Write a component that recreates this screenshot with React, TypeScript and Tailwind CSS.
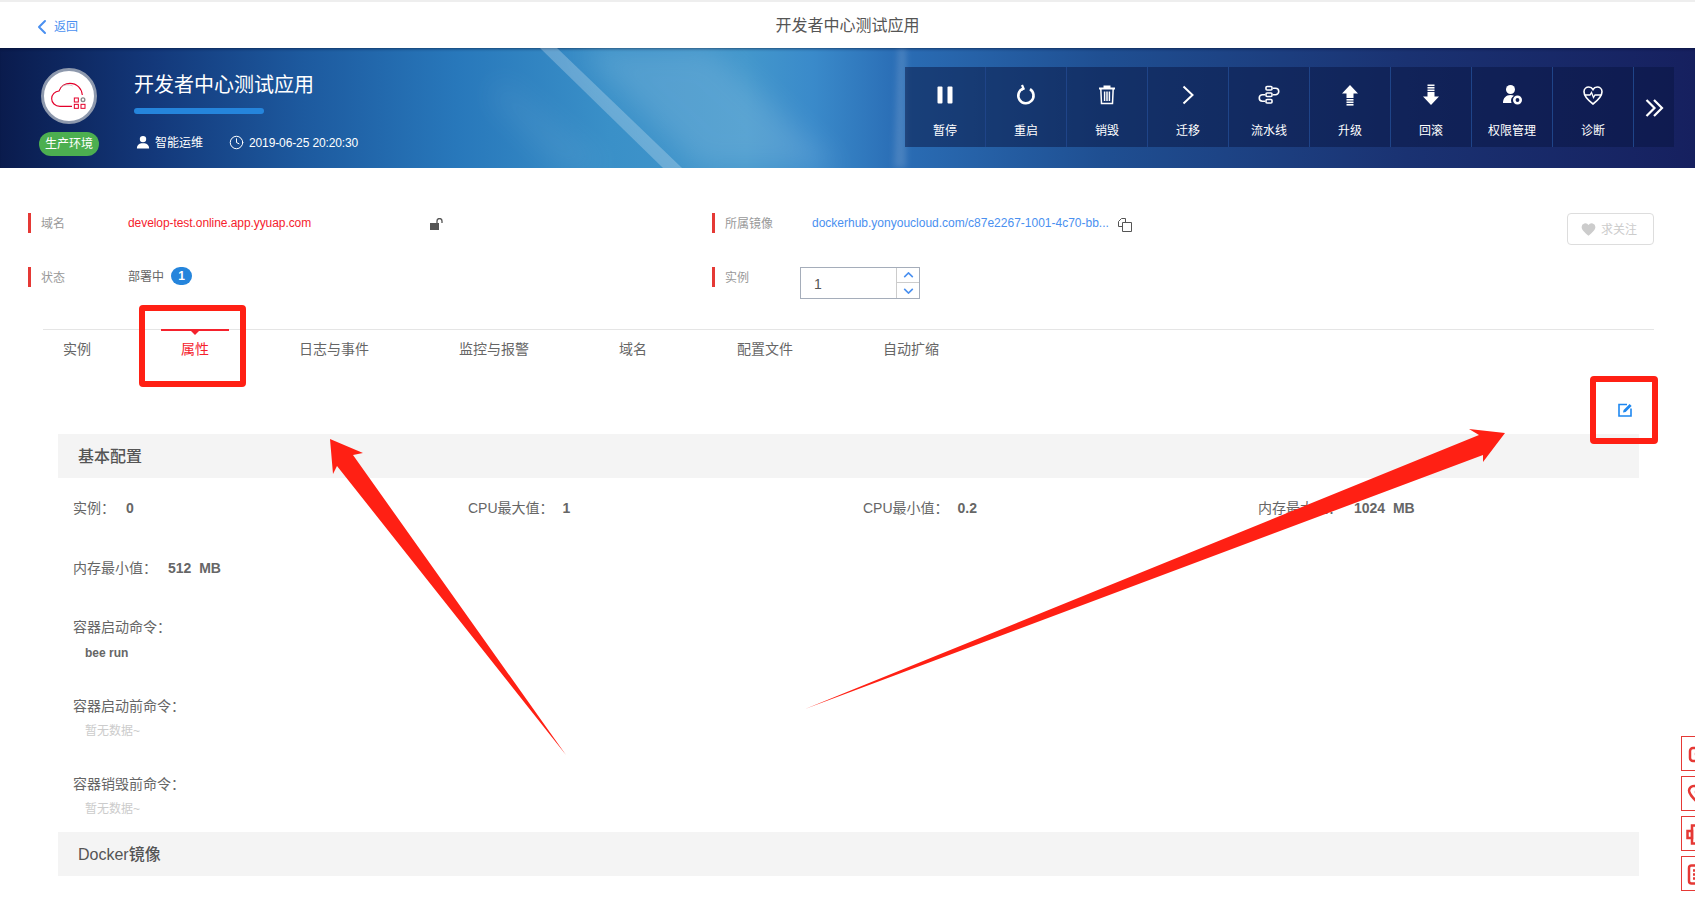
import React from "react";
import { ChevronLeft, Clock } from "lucide-react";

const iconClass = "w-6 h-6 text-white";

const PauseIcon = () => (
  <svg viewBox="0 0 24 24" className={iconClass} fill="currentColor">
    <rect x="4.5" y="3.5" width="5" height="17" rx="1" />
    <rect x="14.5" y="3.5" width="5" height="17" rx="1" />
  </svg>
);

const RestartIcon = () => (
  <svg viewBox="0 0 24 24" className={iconClass} fill="none" stroke="currentColor" strokeWidth="2.6">
    <path d="M9 5.6a7.6 7.6 0 1 0 7 .6" />
    <path d="M8 2l1.6 3.8L6 7.6" strokeWidth="2.2" />
  </svg>
);

const TrashIcon = () => (
  <svg viewBox="0 0 24 24" className={iconClass} fill="none" stroke="currentColor" strokeWidth="1.5">
    <path d="M4 5.5h16M9.5 5.5V3.5h5v2" strokeWidth="2" />
    <path d="M5.8 5.5l.7 15h11l.7-15" />
    <path d="M9.6 8.5v9.5M12 8.5v9.5M14.4 8.5v9.5" />
  </svg>
);

const NextIcon = () => (
  <svg viewBox="0 0 24 24" className={iconClass} fill="none" stroke="currentColor" strokeWidth="2">
    <path d="M7.5 3.5l9 8.500-9 8.500" />
  </svg>
);

const PipelineIcon = () => (
  <svg viewBox="0 0 24 24" className={iconClass} fill="none" stroke="currentColor" strokeWidth="1.6">
    <rect x="9" y="3.500" width="6" height="3.500" rx="1" />
    <rect x="9" y="10" width="6" height="3.500" rx="1" />
    <rect x="9" y="16.500" width="6" height="3.500" rx="1" />
    <path d="M16 5.200h2.500a3 3 0 0 1 0 6.500H16" />
    <path d="M8 11.700H5.500a3 3 0 0 0 0 6.500H8" />
  </svg>
);

const UpgradeIcon = () => (
  <svg viewBox="0 0 24 24" className={iconClass} fill="currentColor">
    <path d="M12 2l8 8.500h-4.500V15h-7v-4.500H4z" />
    <rect x="8.500" y="16" width="7" height="1.600" />
    <rect x="8.500" y="18.500" width="7" height="1.600" />
    <rect x="8.500" y="21" width="7" height="1.600" />
  </svg>
);

const RollbackIcon = () => (
  <svg viewBox="0 0 24 24" className={iconClass} fill="currentColor">
    <rect x="8.500" y="1.500" width="7" height="1.600" />
    <rect x="8.500" y="4" width="7" height="1.600" />
    <rect x="8.500" y="6.500" width="7" height="1.600" />
    <path d="M8.500 9h7v4.500H20L12 22l-8-8.500h4.500z" />
  </svg>
);

const PermissionIcon = () => (
  <svg viewBox="0 0 24 24" className={iconClass} fill="currentColor">
    <circle cx="10.500" cy="6.500" r="4.500" />
    <path d="M3 20c0-5 3-8 7.500-8 1.300 0 2.500.3 3.500.8A6 6 0 0 0 11.500 20z" />
    <circle cx="17.500" cy="17" r="3.200" fill="none" stroke="currentColor" strokeWidth="2.600" />
  </svg>
);

const DiagnoseIcon = () => (
  <svg viewBox="0 0 24 24" className={iconClass} fill="none" stroke="currentColor" strokeWidth="1.600">
    <path d="M12 21C6 16.500 3 13 3 8.800 3 5.800 5.300 4 7.800 4c1.800 0 3.300.9 4.200 2.500C12.900 4.900 14.400 4 16.200 4 18.700 4 21 5.800 21 8.800 21 13 18 16.500 12 21z" />
    <path d="M4 12h5l1.500-2.500 2 5 1.500-2.500h6" strokeWidth="1.300" />
  </svg>
);

const actions = [
  { label: "暂停", icon: <PauseIcon /> },
  { label: "重启", icon: <RestartIcon /> },
  { label: "销毁", icon: <TrashIcon /> },
  { label: "迁移", icon: <NextIcon /> },
  { label: "流水线", icon: <PipelineIcon /> },
  { label: "升级", icon: <UpgradeIcon /> },
  { label: "回滚", icon: <RollbackIcon /> },
  { label: "权限管理", icon: <PermissionIcon /> },
  { label: "诊断", icon: <DiagnoseIcon /> },
];

const tabs = ["实例", "属性", "日志与事件", "监控与报警", "域名", "配置文件", "自动扩缩"];

const stats = [
  { label: "实例：", value: "0", gap: "ml-[11px]" },
  { label: "CPU最大值：", value: "1", gap: "ml-[9px]" },
  { label: "CPU最小值：", value: "0.2", gap: "ml-[9px]" },
  { label: "内存最大值：", value: "1024  MB", gap: "ml-3" },
  { label: "内存最小值：", value: "512  MB", gap: "ml-[11px]" },
];

const commands = [
  { label: "容器启动命令：", value: "bee run" },
  { label: "容器启动前命令：", value: "" },
  { label: "容器销毁前命令：", value: "" },
];

const Logo = () => (
  <svg viewBox="132 213 150 150" className="w-full h-full" fill="none">
    <path
      d="M216 319H180C165 319 155 308 155 296 155 283 165 274 177 273 182 258 196 250 210 250 230 250 245 265 247 285"
      stroke="#e4002b"
      strokeWidth="3.500"
    />
    <path d="M183 262C192 254 206 252 218 258" stroke="#bbb" strokeWidth="2" />
    <rect x="223" y="294" width="12" height="12" stroke="#e4002b" strokeWidth="3" />
    <rect x="223" y="313" width="12" height="12" stroke="#e4002b" strokeWidth="3" />
    <rect x="243" y="313" width="12" height="12" stroke="#e4002b" strokeWidth="3" />
    <circle cx="249" cy="299" r="5.500" stroke="#888" strokeWidth="4" />
  </svg>
);

const Banner = () => (
  <div className="relative h-[120px] flex bg-[linear-gradient(90deg,#0a1b4d_0%,#13387a_9%,#1d5a9f_18%,#2878bb_27%,#3a90c8_36%,#4397cc_44%,#3a8aca_48%,#2a6db5_53%,#1f4f92_65%,#1a3272_83%,#16205f_100%)] shadow-[inset_0_3px_3px_-2px_rgba(0,10,40,0.5)] overflow-hidden">
    <svg className="absolute inset-0 w-full h-full" viewBox="0 0 1695 120" preserveAspectRatio="none">
      <defs>
        <filter id="soft" x="-20%" y="-20%" width="140%" height="140%">
          <feGaussianBlur stdDeviation="14" />
        </filter>
        <filter id="edge" x="-50%" y="-20%" width="200%" height="140%">
          <feGaussianBlur stdDeviation="3" />
        </filter>
      </defs>
      <polygon points="540,0 557,0 682,120 663,120" fill="#fff" opacity="0.24" />
      <polygon points="575,0 710,0 840,120 700,120" fill="#fff" opacity="0.12" filter="url(#soft)" />
      <polygon points="490,50 560,120 610,120 500,30" fill="#fff" opacity="0.06" filter="url(#soft)" />
      <polygon points="898,0 906,0 906,120 894,120" fill="#fff" opacity="0.14" filter="url(#edge)" />
    </svg>
    <div className="relative ml-[39px] w-[60px] flex flex-col items-center pt-5">
      <div className="w-14 h-14 rounded-full bg-white border-[3px] border-[#8e99ad] overflow-hidden">
        <Logo />
      </div>
      <span className="mt-2 w-[60px] h-6 rounded-xl bg-[#4caf50] text-white text-[12px] leading-6 text-center">
        生产环境
      </span>
    </div>
    <div className="relative ml-[35px] flex flex-col">
      <h1 className="mt-[23px] text-[20px] leading-7 font-normal text-white">开发者中心测试应用</h1>
      <div className="mt-[9px] w-[130px] h-[6px] rounded-sm bg-[#2585dc]" />
      <div className="mt-[19px] flex items-center text-[12px] leading-5 text-white">
        <svg viewBox="0 0 24 24" className="ml-[2px] -mt-[2px] w-[14px] h-[14px]" fill="currentColor">
          <circle cx="12" cy="7" r="5.500" />
          <path d="M1.500 23c0-6 4-8 7.500-9h6c3.500 1 7.500 3 7.500 9z" />
        </svg>
        <span className="ml-[5px]">智能运维</span>
        <Clock className="ml-[26px] -mt-[2px] w-[15px] h-[15px]" strokeWidth={1.6} />
        <span className="ml-[5px] tracking-[-0.12px]">2019-06-25 20:20:30</span>
      </div>
    </div>
    <div className="relative ml-auto mr-[21px] mt-[19px] h-[80px] flex bg-[#081440]/50">
      {actions.map((a) => (
        <div key={a.label} className="w-[81px] flex flex-col items-center border-r border-[#1f4488] text-white">
          <div className="mt-4 h-6">{a.icon}</div>
          <span className="mt-[14px] text-[12px] leading-5">{a.label}</span>
        </div>
      ))}
      <div className="w-10 pt-[2px] flex items-center justify-center">
        <svg viewBox="0 0 24 24" className="w-6 h-6 text-white" fill="none" stroke="currentColor" strokeWidth="2.200">
          <path d="M4.500 4l8 8-8 8M12 4l8 8-8 8" />
        </svg>
      </div>
    </div>
  </div>
);

const InfoRow = ({ label, labelWidth = 87, children }: { label: string; labelWidth?: 75 | 87; children: React.ReactNode }) => (
  <div className="h-[54px] flex items-start">
    <span className="w-[3px] h-5 bg-[#e53935]" />
    <span className={`ml-[10px] pt-px text-[12px] leading-5 text-[#999] ${labelWidth === 75 ? "w-[75px]" : "w-[87px]"}`}>{label}</span>
    {children}
  </div>
);

const SectionHeader = ({ title }: { title: string }) => (
  <div className="ml-[58px] mr-[56px] h-[44px] pl-5 pt-px bg-[#f4f4f4] text-[16px] leading-[44px] font-medium text-[#555]">
    {title}
  </div>
);

const sideIcons = [
  <svg key="a" viewBox="0 0 24 24" className="w-6 h-6" fill="none" stroke="#e53935" strokeWidth="2.500"><rect x="4" y="6" width="14" height="13" rx="3" /><circle cx="12" cy="12" r="2" fill="#e53935" /></svg>,
  <svg key="b" viewBox="0 0 24 24" className="w-6 h-6" fill="none" stroke="#e53935" strokeWidth="2.500"><path d="M12 21C6 15 3 12 3 8.500A5 5 0 0 1 12 6" /><circle cx="12" cy="10" r="2" fill="#e53935" /></svg>,
  <svg key="c" viewBox="0 0 24 24" className="w-6 h-6" fill="none" stroke="#e53935" strokeWidth="2.500"><rect x="1.500" y="9" width="4.500" height="7" /><rect x="6" y="3.500" width="14" height="18" /></svg>,
  <svg key="d" viewBox="0 0 24 24" className="w-6 h-6" fill="none" stroke="#e53935" strokeWidth="2.500"><rect x="3" y="3.500" width="16" height="18" rx="2.500" /><path d="M7 8.500h10M7 12.500h10M7 16.500h10" /></svg>,
];

export default function App() {
  return (
    <div className="relative w-full h-[897px] overflow-hidden bg-white font-['Liberation_Sans','Noto_Sans_CJK_SC',sans-serif] text-[#666]">
      <div className="h-[2px] bg-[#eee]" />
      <div className="relative h-[46px] pt-[2px] flex items-center justify-center bg-white">
        <div className="absolute left-[30px] top-[13px] flex items-center text-[12px] leading-5 text-[#4a90f0]">
          <ChevronLeft className="w-6 h-6" strokeWidth={2} />
          <span>返回</span>
        </div>
        <span className="text-[16px] text-[#555]">开发者中心测试应用</span>
      </div>
      <Banner />

      <div className="flex pl-[28px] pt-[45px] pb-2">
        <div className="w-[684px]">
          <InfoRow label="域名">
            <span className="w-[302px] text-[12px] leading-5 tracking-[-0.07px] text-[#f5222d]">develop-test.online.app.yyuap.com</span>
            <svg viewBox="0 0 14 12" className="mt-[5px] w-[14px] h-3">
              <rect x="0" y="5" width="9" height="7" fill="#555" />
              <path d="M7 5V3a2.500 2.500 0 0 1 5 0v2" fill="none" stroke="#555" strokeWidth="1.300" />
            </svg>
          </InfoRow>
          <InfoRow label="状态">
            <span className="pt-px text-[12px] leading-[18px] text-[#666]">部署中</span>
            <span className="ml-[7px] w-[21px] h-[18px] rounded-full bg-[#2585dc] text-white text-[12px] font-bold leading-[18px] text-center">1</span>
          </InfoRow>
        </div>
        <div className="flex-1">
          <InfoRow label="所属镜像">
            <span className="w-[306px] text-[12px] leading-5 text-[#4a90f0] whitespace-nowrap">dockerhub.yonyoucloud.com/c87e2267-1001-4c70-bb...</span>
            <svg viewBox="0 0 14 14" className="mt-[5px] w-[14px] h-[14px]" fill="none" stroke="#555" strokeWidth="1">
              <path d="M4.500 8.500H.5v-5l3-3h4v4" />
              <path d="M4.500 4.500h9v9h-9z" />
            </svg>
          </InfoRow>
          <InfoRow label="实例" labelWidth={75}>
            <div className="w-[120px] h-[32px] flex border border-[#a5adba] bg-white">
              <span className="flex-1 pl-[13px] text-[14px] leading-[32px] text-[#555]">1</span>
              <div className="w-[23px] flex flex-col border-l border-[#ccc]">
                <span className="h-[15px] flex items-center justify-center border-b border-[#ccc]">
                  <svg viewBox="0 0 12 7" className="w-[11px] h-[6px]" fill="none" stroke="#4a90f0" strokeWidth="1.800"><path d="M1 6l5-5 5 5" /></svg>
                </span>
                <span className="flex-1 flex items-center justify-center">
                  <svg viewBox="0 0 12 7" className="w-[11px] h-[6px]" fill="none" stroke="#4a90f0" strokeWidth="1.800"><path d="M1 1l5 5 5-5" /></svg>
                </span>
              </div>
            </div>
          </InfoRow>
        </div>
        <div className="mr-[41px] w-[87px] h-[32px] flex items-center pl-[14px] pt-[2px] border border-[#ddd] rounded text-[12px] text-[#ccc]">
          <svg viewBox="0 0 24 24" className="-ml-px -mt-[2px] w-[15px] h-[15px]" fill="#ccc">
            <path d="M12 22C5 16 1 12.500 1 8a6 6 0 0 1 11-3.300A6 6 0 0 1 23 8c0 4.500-4 8-11 14z" />
          </svg>
          <span className="ml-[5px]">求关注</span>
        </div>
      </div>

      <div className="ml-[43px] mr-[41px] border-t border-[#e5e5e5]">
        <div className="flex gap-[90px] pl-5 pt-2 text-[14px] leading-[22px] text-[#666]">
          {tabs.map((t) =>
            t === "属性" ? (
              <span key={t} className="relative text-[#f5222d]">
                {t}
                <span className="absolute -left-5 -right-5 -top-[9px] h-[2px] bg-[#f5222d]" />
                <span className="absolute left-[10px] -top-[7px] w-0 h-0 border-x-[4px] border-t-[4px] border-x-transparent border-t-[#f5222d]" />
              </span>
            ) : (
              <span key={t}>{t}</span>
            ),
          )}
        </div>
      </div>

      <div className="mt-[42px] mb-[17px] pr-[62px] flex justify-end h-[15px]">
        <svg viewBox="0 0 15 15" className="w-[15px] h-[15px]" fill="none">
          <path d="M9 2.500H1v11.500h12V6.500" stroke="#1e88f0" strokeWidth="1.600" />
          <path d="M5 10.500l.6-2.600 6-6 2 2-6 6z" fill="#1e88f0" />
        </svg>
      </div>

      <SectionHeader title="基本配置" />
      <div className="ml-[73px] pt-5 grid grid-cols-[395px_395px_395px_395px] gap-y-10 text-[14px] leading-5">
        {stats.map((s) => (
          <div key={s.label} className="flex text-[#666]">
            <span>{s.label}</span>
            <span className={`${s.gap} font-bold whitespace-pre text-[#666]`}>{s.value}</span>
          </div>
        ))}
      </div>
      <div className="ml-[73px] mt-[39px] flex flex-col gap-[32.500px] mb-3">
        {commands.map((c) => (
          <div key={c.label} className="h-[46px]">
            <div className="text-[14px] leading-5 text-[#666]">{c.label}</div>
            {c.value ? (
              <div className="mt-[6px] ml-3 text-[12px] leading-5 font-bold text-[#666]">{c.value}</div>
            ) : (
              <div className="mt-[5px] ml-3 text-[12px] leading-5 text-[#ccc]">暂无数据~</div>
            )}
          </div>
        ))}
      </div>
      <SectionHeader title="Docker镜像" />

      <div className="absolute left-[1681px] top-[736px] flex flex-col gap-[5px]">
        {sideIcons.map((icon, i) => (
          <div key={i} className="w-10 h-[35px] flex items-center pl-1 border border-[#e53935] bg-white">
            {icon}
          </div>
        ))}
      </div>

      {/* red hand-drawn annotations on top of the screenshot */}
      <div className="absolute left-[139px] top-[305px] w-[107px] h-[82px] border-[6px] border-[#ff2014] rounded" />
      <div className="absolute left-[1590px] top-[376px] w-[68px] h-[68px] border-[6px] border-[#ff2014] rounded" />
      <svg className="absolute left-0 top-0 w-[1695px] h-[897px] pointer-events-none" viewBox="0 0 1695 897" fill="#ff2014">
        <polygon points="330,439 363,453 353,455 566,755 337,466 333,474" />
        <polygon points="1505,433 1469,429 1479,435 805,709 1483,455 1483,462" />
      </svg>
    </div>
  );
}
